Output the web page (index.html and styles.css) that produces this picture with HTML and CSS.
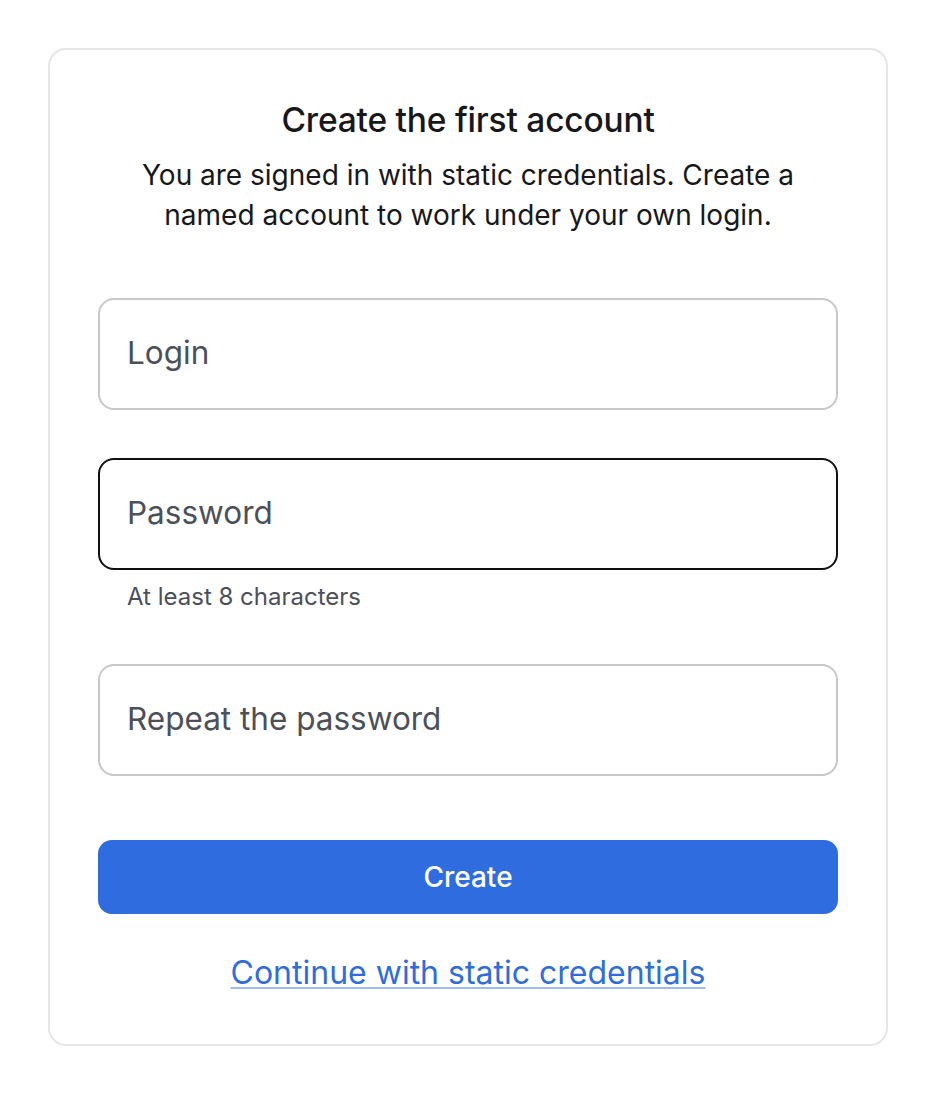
FILE: index.html
```html
<!DOCTYPE html>
<html lang="en">
<head>
<meta charset="utf-8">
<title>Create the first account</title>
<link rel="stylesheet" href="styles.css">
</head>
<body>
<main class="page">
  <section class="card">
    <h1 class="title">Create the first account</h1>
    <p class="subtitle">You are signed in with static credentials. Create a named account to work under your own login.</p>
    <form class="form">
      <div class="field">
        <input class="input" type="text" placeholder="Login">
      </div>
      <div class="field">
        <input class="input input-focus" type="password" placeholder="Password">
        <div class="hint">At least 8 characters</div>
      </div>
      <div class="field">
        <input class="input" type="password" placeholder="Repeat the password">
      </div>
      <button class="btn" type="button">Create</button>
      <a class="link" href="#">Continue with static credentials</a>
    </form>
  </section>
</main>
</body>
</html>
```
FILE: styles.css
```css
* { box-sizing: border-box; }
html, body { margin: 0; padding: 0; background: #ffffff; }
body { font-family: Inter, "Noto Sans", sans-serif; color: #18181b; }
.page { padding: 48px; }
.card {
  width: 840px;
  height: 998px;
  border: 2px solid #e6e6e9;
  border-radius: 18px;
  padding: 48px 48px;
  display: flex;
  flex-direction: column;
  align-items: center;
}
.title {
  margin: 0;
  font-size: 33.5px;
  line-height: 44px;
  font-weight: 500;
  letter-spacing: -0.2px;
  color: #18181b;
}
.subtitle {
  margin: 13px 0 0;
  text-align: center;
  font-size: 28px;
  line-height: 40px;
  color: #18181b;
  max-width: 690px;
}
.form {
  width: 740px;
  margin-top: 63px;
  display: flex;
  flex-direction: column;
}
.field { margin-bottom: 48px; }
.input {
  display: block;
  width: 100%;
  height: 112px;
  border: 2px solid #c8c8cb;
  border-radius: 16px;
  padding: 0 27px 3px;
  font-family: inherit;
  font-size: 31.5px;
  color: #18181b;
  background: #fff;
  outline: none;
}
.input::placeholder { color: #4b5059; }
.input-focus { border-color: #111111; }
.hint {
  margin-top: 13px;
  margin-bottom: 5px;
  padding-left: 29px;
  font-size: 24px;
  line-height: 28px;
  color: #4b5059;
}
.btn {
  margin-top: 16px;
  height: 74px;
  border: none;
  border-radius: 14px;
  background: #2f6ce0;
  color: #fff;
  font-family: inherit;
  font-size: 28px;
  font-weight: 500;
}
.link {
  margin-top: 39px;
  align-self: center;
  font-size: 32px;
  line-height: 40px;
  color: #2f6ce0;
  text-decoration: underline;
  text-decoration-color: #9fbaf0;
  text-decoration-thickness: 2px;
  text-underline-offset: 3px;
}
```
